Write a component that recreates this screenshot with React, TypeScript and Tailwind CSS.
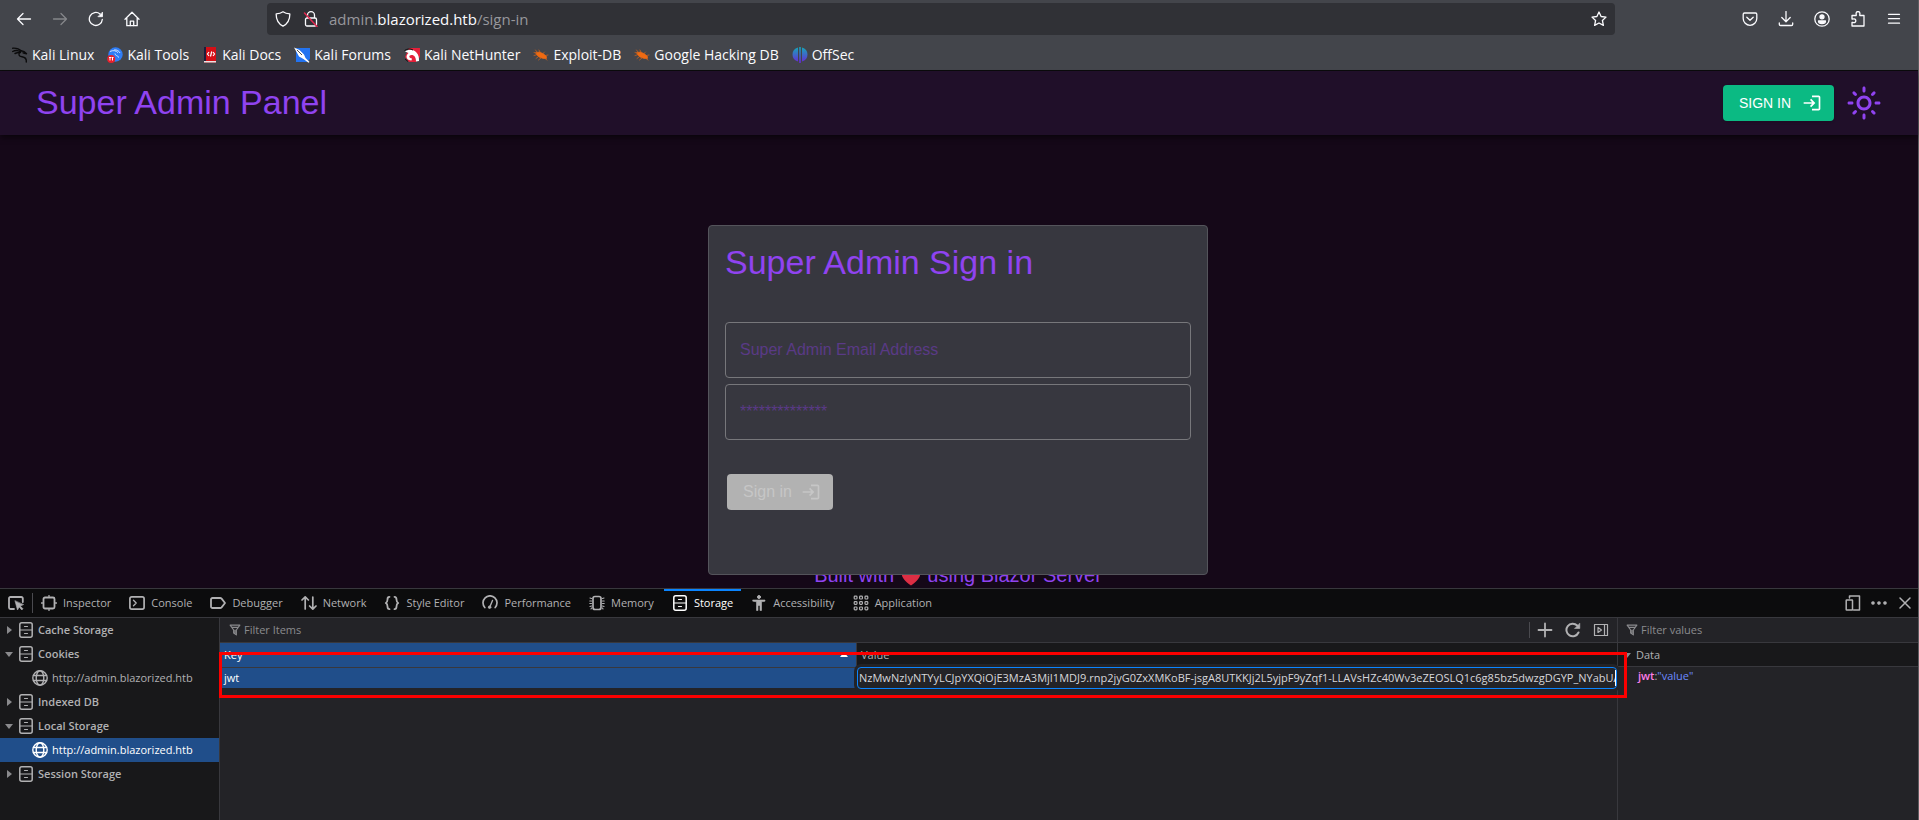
import React from "react";
import { MdLogin, MdOutlineLightMode } from "react-icons/md";

const token =
    "NzMwNzIyNTYyLCJpYXQiOjE3MzA3MjI1MDJ9.rnp2jyG0ZxXMKoBF-jsgA8UTKKJj2L5yjpF9yZqf1-LLAVsHZc40Wv3eZEOSLQ1c6g85bz5dwzgDGYP_NYabUA";

type IconProps = {
    children: React.ReactNode;
    className?: string;
    width?: number;
};

// 16x16 line icon used by the browser chrome and the devtools
function Icon({ children, className = "size-4", width = 1.3 }: IconProps) {
    return (
        <svg
            viewBox="0 0 16 16"
            fill="none"
            stroke="currentColor"
            strokeWidth={width}
            strokeLinecap="round"
            strokeLinejoin="round"
            className={`shrink-0 ${className}`}
            aria-hidden="true"
        >
            {children}
        </svg>
    );
}

const BugIcon = () => (
    <Icon className="size-4 text-[#ef6a12]" width={0.6}>
        <path d="M3 5.500 6.500 5l4 1.800 3 2.700 0 2-3.500 0-4-1.500-2.500-2.300z" fill="currentColor" />
        <path d="M4 5 2.500 3M7 5 6 3M10 6.500l1.500-1.500M12.500 8.500l2.500-.5M3 8 1 8.500M5 10l-2 1.500M8 11l-2.500 2M12 11.500l2 1.500M1 5.500l2 .5" />
    </Icon>
);

const bookmarks = [
    {
        name: "Kali Linux",
        icon: (
            <Icon className="size-4 text-[#0b0b0c]" width={1.4}>
                <path d="M.7 1.200C4 1 7 1.600 9 4M.7 4.500C3 3.300 6 3.300 8.500 5M3 6.500c2-1 3.500-1.200 5.500-1" />
                <path d="M8.500 3.500c2.500.3 4.500 1 6 3.200l-2-.4-1.500-.5" />
                <path d="M8.500 4.500C5.500 7 7 9.500 10 9.800c3 .4 4.700 2 4.300 5.200" />
            </Icon>
        ),
    },
    {
        name: "Kali Tools",
        icon: (
            <svg viewBox="0 0 16 16" className="size-4 shrink-0" aria-hidden="true">
                <circle cx="8.500" cy="7.500" r="7.200" fill="#2f7df6" />
                <path d="M3 4.500c3-1.500 6-1 8 1.200M7 3c3-.5 5 1 6 3M8 6.500c0 2 2.500 2 4 4" fill="none" stroke="#cfe2ff" strokeWidth="1" />
                <circle cx="4.200" cy="12" r="4" fill="#e8202c" />
                <path d="M2 10.500h2M3 10.500v3M4.500 10.500h2M5.500 10.500v3" stroke="#fff" strokeWidth="1" />
            </svg>
        ),
    },
    {
        name: "Kali Docs",
        icon: (
            <svg viewBox="0 0 16 16" className="size-4 shrink-0" aria-hidden="true">
                <path d="M2 0h12v15.500H2z" fill="#d40f16" />
                <path d="M2 0h2v15H2z" fill="#1d1d3c" />
                <path d="M2 14h12v1.500H2z" fill="#e9e4e4" />
                <path d="M7 5 5.500 7 7 9M11 5l1.500 2L11 9M9.700 4.500l-1.200 5" fill="none" stroke="#fff" strokeWidth="1.200" />
            </svg>
        ),
    },
    {
        name: "Kali Forums",
        icon: (
            <svg viewBox="0 0 16 16" className="size-4 shrink-0" aria-hidden="true">
                <path d="M2 1h14v11l-3 3H2z" fill="#2373f0" />
                <path d="M0 .5 5.500 3 10 7.500l1.500 3.500 4 4-1 .7-5-3.700L5 9.500 2 4z" fill="#fff" />
                <path d="m3 3 5 5" stroke="#222" strokeWidth=".8" />
            </svg>
        ),
    },
    {
        name: "Kali NetHunter",
        icon: (
            <svg viewBox="0 0 16 16" className="size-4 shrink-0" aria-hidden="true">
                <path d="M5 1h11v9l-4 5H5L1 10z" fill="#e5203a" />
                <path d="M1 4.500c3-2.500 8-2.500 11 .5s3 6 3 9l-3 .5c0-4-1.500-6.500-4.500-6.500S4.500 11 8 11.500l-.5 2C2.500 13.500 1 9 4.500 6z" fill="#fff" />
                <path d="M.5 3.500c3-2 6-2 8.500-.5M1 12l3 2.500" stroke="#111" strokeWidth="1" fill="none" />
            </svg>
        ),
    },
    { name: "Exploit-DB", icon: <BugIcon /> },
    { name: "Google Hacking DB", icon: <BugIcon /> },
    {
        name: "OffSec",
        icon: (
            <svg viewBox="0 0 16 16" className="size-4 shrink-0" aria-hidden="true">
                <defs>
                    <linearGradient id="offsec" x1="0" y1="0" x2="0" y2="1">
                        <stop offset="0" stopColor="#14a8b8" />
                        <stop offset="1" stopColor="#6a25d8" />
                    </linearGradient>
                </defs>
                <path d="M6 .5v14C2.500 13.500.5 11 .5 7.500S2.500 1.500 6 .5zM10 .5v14c3.500-1 5.500-3.500 5.500-7S13.500 1.500 10 .5zM7.200 0h1.600v16H7.200z" fill="url(#offsec)" />
            </svg>
        ),
    },
];

const StorageIcon = ({ className = "size-4" }: { className?: string }) => (
    <Icon className={className} width={1.5}>
        <rect x="1.800" y=".8" width="12.400" height="14.400" rx="2" />
        <path d="M2 8h12" strokeWidth="1.200" />
        <path d="M6.500 4.500h3M6.500 11.500h3" strokeWidth="1.200" />
    </Icon>
);

const GlobeIcon = () => (
    <Icon width={1.4}>
        <circle cx="8" cy="8" r="7.200" />
        <ellipse cx="8" cy="8" rx="3.800" ry="7.200" />
        <path d="M1.500 5.500h13M1.500 10.500h13" />
    </Icon>
);

const FilterIcon = () => (
    <Icon className="size-3" width={1.5}>
        <path d="M1.500 1.500h13L9.800 8v6.500L6.200 12V8zM4 4.500h8M8 8v4" />
    </Icon>
);

const tabs = [
    {
        name: "Inspector",
        icon: (
            <Icon width={1.8}>
                <rect x="2.500" y="2.500" width="11" height="11" rx="1.500" />
                <path d="M8 .5v1M8 14.500v1M.5 8h1M14.500 8h1" strokeWidth="1.300" />
            </Icon>
        ),
    },
    {
        name: "Console",
        icon: (
            <Icon width={1.7}>
                <rect x=".9" y="1.900" width="14.200" height="12.200" rx="1.800" />
                <path d="M4.500 5.200 7.200 8l-2.700 2.800" strokeWidth="1.300" />
            </Icon>
        ),
    },
    {
        name: "Debugger",
        icon: (
            <Icon width={1.8}>
                <path d="M2.500 3h7.700c.6 0 1 .2 1.400.6L15 8l-3.400 4.400c-.4.4-.8.6-1.400.6H2.500C1.600 13 1 12.400 1 11.500v-7C1 3.600 1.600 3 2.500 3z" />
            </Icon>
        ),
    },
    {
        name: "Network",
        icon: (
            <Icon width={1.7}>
                <path d="M4.200 14V2M1 5l3.200-3.200L7.400 5M11.800 2v12M8.600 11l3.200 3.200L15 11" />
            </Icon>
        ),
    },
    {
        name: "Style Editor",
        icon: (
            <Icon width={1.8}>
                <path d="M5.500 1.800C3.500 1.800 3.500 3 3.500 4.500S3.300 7.300 1.800 8c1.500.7 1.700 2 1.700 3.500s0 2.700 2 2.700M10.500 1.800c2 0 2 1.200 2 2.700s.2 2.800 1.700 3.500c-1.500.7-1.700 2-1.700 3.500s0 2.700-2 2.700" />
            </Icon>
        ),
    },
    {
        name: "Performance",
        icon: (
            <Icon width={1.7}>
                <path d="M2.800 12.500a7 7 0 1 1 10.400 0" />
                <path d="m10.500 5.500-2.500 6" strokeWidth="1.400" />
                <circle cx="7.600" cy="12.200" r="1.300" fill="currentColor" strokeWidth=".8" />
            </Icon>
        ),
    },
    {
        name: "Memory",
        icon: (
            <Icon width={1.7}>
                <rect x="4" y="1.500" width="8" height="13" rx="2" />
                <path d="M2.500 3.500 1 3M2.500 6H.8M2.500 8.500H.8M2.500 11 1 11.500M13.500 3.500 15 3M13.500 6h1.700M13.500 8.500h1.700M13.500 11l1.500.5M2.500 13 2 14M13.500 13l.5 1" strokeWidth="1.100" />
            </Icon>
        ),
    },
    { name: "Storage", icon: <StorageIcon /> },
    {
        name: "Accessibility",
        icon: (
            <Icon width={1}>
                <circle cx="8" cy="2" r="1.500" fill="currentColor" />
                <path d="M2 5h12v1.200l-3.500.6V15.500H9v-5H7v5H5.500V6.800L2 6.200z" fill="currentColor" strokeWidth=".6" />
            </Icon>
        ),
    },
    {
        name: "Application",
        icon: (
            <Icon width={1.2}>
                {[2.6, 8, 13.4].map((y) =>
                    [2.6, 8, 13.4].map((x) => (
                        <rect key={`${x}-${y}`} x={x - 1.4} y={y - 1.4} width="2.800" height="2.800" rx=".8" />
                    ))
                )}
            </Icon>
        ),
    },
];

const storageTree = [
    { name: "Cache Storage", open: false, hosts: [] },
    { name: "Cookies", open: true, hosts: [{ url: "http://admin.blazorized.htb", selected: false }] },
    { name: "Indexed DB", open: false, hosts: [] },
    { name: "Local Storage", open: true, hosts: [{ url: "http://admin.blazorized.htb", selected: true }] },
    { name: "Session Storage", open: false, hosts: [] },
];

function BrowserBar() {
    return (
        <div className="bg-[#43454b] border-b border-[#0c0c0d] text-[#fbfbfe]">
            <div className="flex items-center h-[38px] pl-4 pr-4">
                <div className="flex items-center gap-5 w-[251px] shrink-0">
                    <button aria-label="Back">
                        <Icon>
                            <path d="M14.500 8h-13M7 2.500 1.500 8 7 13.500" />
                        </Icon>
                    </button>
                    <button aria-label="Forward" className="text-[#85868a]">
                        <Icon>
                            <path d="M1.500 8h13M9 2.500 14.500 8 9 13.500" />
                        </Icon>
                    </button>
                    <button aria-label="Reload">
                        <Icon>
                            <path d="M14.300 8.500A6.500 6.500 0 1 1 12 3" />
                            <path d="M14.500 1.500v4.200h-4.200z" fill="currentColor" strokeWidth=".8" />
                        </Icon>
                    </button>
                    <button aria-label="Home">
                        <Icon>
                            <path d="M1 8.200 8 1.300l7 6.900M2.800 7v7.700h10.400V7" />
                            <path d="M6.300 14.500v-4.300h3.400v4.300" />
                        </Icon>
                    </button>
                </div>
                <div className="flex items-center grow h-8 bg-[#303136] rounded px-2">
                    <Icon>
                        <path d="M8 .8c2 1.500 4.200 2 6.800 2 .2 5.700-1.800 9.800-6.800 12.400C3 12.600 1 8.500 1.200 2.800 3.800 2.800 6 2.300 8 .8z" />
                    </Icon>
                    <Icon className="size-4 ml-3">
                        <rect x="2.500" y="7" width="11" height="8" rx="1.500" />
                        <path d="M4.500 6.500V4.200a3.500 3.500 0 0 1 7 0v2.300" />
                        <path d="M1.500 2 14 15.500" stroke="#e22850" strokeWidth="1.500" />
                    </Icon>
                    <p className="grow ml-[10px] text-[15px] text-[#97979c]">
                        admin.<span className="text-[#fbfbfe]">blazorized.htb</span>/sign-in
                    </p>
                    <button aria-label="Bookmark this page">
                        <Icon>
                            <path d="m8 1 2.100 4.500 4.900.6-3.600 3.400 1 4.900L8 12l-4.400 2.400 1-4.900L1 6.100l4.900-.6z" />
                        </Icon>
                    </button>
                </div>
                <div className="flex items-center gap-5 ml-[127px] shrink-0">
                    <button aria-label="Save to Pocket">
                        <Icon>
                            <path d="M2.500 2h11c.8 0 1.300.5 1.300 1.300V7.500a6.800 6.800 0 0 1-13.600 0V3.300C1.200 2.500 1.700 2 2.500 2z" />
                            <path d="M4.800 6.200 8 9.300l3.200-3.100" />
                        </Icon>
                    </button>
                    <button aria-label="Downloads">
                        <Icon>
                            <path d="M8 .5v10M3.800 6.500 8 10.700l4.200-4.200M1.300 12v1.200c0 .8.5 1.300 1.300 1.300h10.800c.8 0 1.300-.5 1.300-1.300V12" />
                        </Icon>
                    </button>
                    <button aria-label="Account">
                        <Icon>
                            <circle cx="8" cy="8" r="7.200" />
                            <circle cx="8" cy="5.800" r="2" fill="currentColor" />
                            <path d="M4.500 10h7c0 1.500-1.500 2.600-3.500 2.600S4.500 11.500 4.500 10z" fill="currentColor" />
                        </Icon>
                    </button>
                    <button aria-label="Extensions">
                        <Icon>
                            <path d="M2 15V11.500h1.200a1.900 1.900 0 1 0 0-3.500H2V4.500h4.200V3a1.900 1.900 0 1 1 3.600 0v1.500H14V15z" />
                        </Icon>
                    </button>
                    <button aria-label="Menu">
                        <Icon>
                            <path d="M2.500 3.300h11M2.500 7.700h11M2.500 12.200h11" />
                        </Icon>
                    </button>
                </div>
            </div>
            <nav className="flex items-center gap-[13px] h-8 pt-0.5 pl-3 text-sm">
                {bookmarks.map((el) => (
                    <a key={el.name} href="#" className="flex items-center gap-1 whitespace-nowrap">
                        {el.icon}
                        {el.name}
                    </a>
                ))}
            </nav>
        </div>
    );
}

function AdminPage() {
    return (
        <div className="bg-[#150818] text-[#9043f0] font-['Liberation_Sans',sans-serif]">
            <header className="relative flex items-center justify-between h-16 pl-9 pr-9 bg-[#200f29] shadow-md shadow-black/40">
                <h1 className="pb-0.5 text-[34px] leading-10">Super Admin Panel</h1>
                <div className="flex items-center gap-3">
                    <button className="flex items-center justify-between w-[111px] h-9 pl-4 pr-3 rounded bg-[#0bba83] text-white text-sm shadow">
                        SIGN IN
                        <MdLogin size={20} />
                    </button>
                    <button aria-label="Light mode">
                        <MdOutlineLightMode size={36} />
                    </button>
                </div>
            </header>
            <main className="flex flex-col items-center pt-[90px] pb-px pr-0.5">
                <form className="relative z-10 w-[500px] h-[350px] p-4 rounded border border-[#54545b] bg-[#37373f]">
                    <h2 className="text-[34px] leading-10">Super Admin Sign in</h2>
                    <div className="flex flex-col gap-[6px] mt-10">
                        <input
                            type="email"
                            aria-label="Super Admin Email Address"
                            placeholder="Super Admin Email Address"
                            className="w-full h-14 px-[14px] rounded border border-[#77777b] bg-transparent placeholder:text-[#5a3a86]"
                        />
                        <input
                            type="password"
                            aria-label="Password"
                            placeholder="**************"
                            className="w-full h-14 px-[14px] rounded border border-[#77777b] bg-transparent placeholder:text-[#5a3a86]"
                        />
                    </div>
                    <button
                        disabled
                        className="flex items-center justify-between w-[106px] h-9 mt-[34px] ml-[2px] pl-4 pr-3 rounded bg-[#b2b2b2] text-[#c6c6c6]"
                    >
                        Sign in
                        <MdLogin size={20} />
                    </button>
                </form>
                <p className="-mt-3 text-xl leading-6">
                    Built with{" "}
                    <svg viewBox="0 0 20 18" className="inline w-5 h-[18px] mx-px" aria-label="love" role="img">
                        <path d="M10 17.500C4 13.500.8 9.500.8 5.700.8 2.800 2.900.8 5.500.8 7.500.8 9.200 1.900 10 3.700 10.800 1.900 12.500.8 14.500.8c2.600 0 4.700 2 4.700 4.900 0 3.800-3.200 7.800-9.200 11.800z" fill="#dd2e44" />
                    </svg>{" "}
                    using Blazor Server
                </p>
            </main>
        </div>
    );
}

function Toolbox() {
    return (
        <div className="flex items-center justify-between h-[30px] border-y border-[#38383d] bg-[#0c0c0d] text-[#b1b1b3]">
            <div className="flex items-center h-full">
                <button aria-label="Pick an element" className="px-2">
                    <Icon width={1.8}>
                        <path d="M14.800 7V3.500c0-.9-.6-1.500-1.500-1.500H2.500C1.600 2 1 2.600 1 3.500v9c0 .9.600 1.500 1.500 1.500H6" />
                        <path d="m7 6 2.500 9 1.700-3 2.600 3 1.200-1.200-2.700-2.700 3-1.400z" fill="currentColor" strokeWidth=".6" />
                    </Icon>
                </button>
                <div className="w-px h-5 bg-[#4a4a4f]" />
                <div className="flex h-full gap-0.5">
                    {tabs.map((el) => (
                        <button
                            key={el.name}
                            className={`flex items-center gap-[6px] h-full px-2 border-y-2 border-b-transparent whitespace-nowrap ${
                                el.name === "Storage" ? "border-t-[#0a84ff] text-white" : "border-t-transparent"
                            }`}
                        >
                            {el.icon}
                            {el.name}
                        </button>
                    ))}
                </div>
            </div>
            <div className="flex items-center gap-[10px] pr-[5px]">
                <button aria-label="Responsive design mode">
                    <Icon width={1.5}>
                        <path d="M4.500 3V1h10v14H8.500" />
                        <rect x="1.200" y="5" width="6.300" height="10" rx=".5" />
                    </Icon>
                </button>
                <button aria-label="More tools">
                    <Icon width={1.2}>
                        <circle cx="2" cy="8" r="1.200" fill="currentColor" />
                        <circle cx="8" cy="8" r="1.200" fill="currentColor" />
                        <circle cx="14" cy="8" r="1.200" fill="currentColor" />
                    </Icon>
                </button>
                <button aria-label="Close">
                    <Icon width={1.5}>
                        <path d="m3 3 10 10M13 3 3 13" />
                    </Icon>
                </button>
            </div>
        </div>
    );
}

function StorageTree() {
    return (
        <ul className="w-[220px] shrink-0 border-r border-[#38383d] bg-[#18181a] text-[#b1b1b3]">
            {storageTree.map((el) => (
                <li key={el.name}>
                    <div className="flex items-center h-6 pl-1 font-semibold">
                        <svg viewBox="0 0 10 10" className="size-[10px] text-[#8a8a8d]" aria-hidden="true">
                            <path d={el.open ? "M1 3h8L5 8z" : "M3 1v8l5-4z"} fill="currentColor" />
                        </svg>
                        <StorageIcon className="size-4 ml-1 mr-1" />
                        {el.name}
                    </div>
                    {el.hosts.map((host) => (
                        <div
                            key={host.url}
                            className={`flex items-center gap-1 h-6 pl-8 ${host.selected ? "bg-[#204e8a] text-white" : ""}`}
                        >
                            <GlobeIcon />
                            {host.url}
                        </div>
                    ))}
                </li>
            ))}
        </ul>
    );
}

function StorageTable() {
    return (
        <div className="relative grow min-w-0">
            <div className="flex items-center h-[25px] pl-[9px] pr-2 border-b border-[#38383d] text-[#8b8b8e]">
                <FilterIcon />
                <input
                    aria-label="Filter Items"
                    placeholder="Filter Items"
                    className="grow ml-[3px] bg-transparent placeholder:text-[#8b8b8e]"
                />
                <div className="w-px h-4 mr-[7px] bg-[#4a4a4f]" />
                <div className="flex items-center gap-3 text-[#b1b1b3]">
                    <button aria-label="Add item">
                        <Icon width={1.8}>
                            <path d="M8 1.500v13M1.500 8h13" />
                        </Icon>
                    </button>
                    <button aria-label="Refresh items">
                        <Icon width={2}>
                            <path d="M13.500 10.500A6.300 6.300 0 1 1 12.200 3.500" />
                            <path d="M14.800 1.500v5H9.800z" fill="currentColor" strokeWidth=".6" />
                        </Icon>
                    </button>
                    <button aria-label="Toggle sidebar">
                        <Icon width={1.2}>
                            <rect x="1.500" y="2.500" width="13" height="11" />
                            <path d="M11.500 2.500v11M5 5.500v5L8.500 8z" />
                        </Icon>
                    </button>
                </div>
            </div>
            <table className="w-full table-fixed border-separate border-spacing-0 text-left">
                <thead>
                    <tr className="h-[25px]">
                        <th className="w-[45.6%] py-0 px-1 bg-[#204e8a] font-normal text-white border-r border-b border-[#38383d]">
                            <div className="flex items-center justify-between pr-1">
                                Key
                                <svg viewBox="0 0 8 6" className="w-2 h-[6px]" aria-hidden="true">
                                    <path d="M4 0 8 5H0z" fill="currentColor" />
                                </svg>
                            </div>
                        </th>
                        <th className="py-0 px-1 bg-[#18181a] font-normal text-[#b1b1b3] border-b border-[#38383d]">Value</th>
                    </tr>
                </thead>
                <tbody>
                    <tr className="h-5">
                        <td className="py-0 px-1 bg-[#204e8a] text-white">jwt</td>
                        <td className="p-0">
                            <div className="relative flex items-center h-[22px] pl-px rounded-sm bg-[#232327] border border-[#0a84ff] ring-3 ring-[#232327] text-[#d7d7db] -my-px">
                                <input
                                    aria-label="jwt value"
                                    defaultValue={token}
                                    className="w-full h-4 bg-transparent border-r border-white outline-none"
                                />
                            </div>
                        </td>
                    </tr>
                </tbody>
            </table>
            {/* red highlight drawn over the edited row */}
            <div className="absolute z-10 -left-px -right-[10px] top-[34px] h-[46px] border-3 border-[#fb0000] pointer-events-none" />
        </div>
    );
}

function ValuePanel() {
    return (
        <div className="w-[301px] shrink-0 border-l border-[#38383d]">
            <div className="flex items-center h-[25px] pl-2 border-b border-[#38383d] text-[#8b8b8e]">
                <FilterIcon />
                <input
                    aria-label="Filter values"
                    placeholder="Filter values"
                    className="grow ml-[3px] bg-transparent placeholder:text-[#8b8b8e]"
                />
            </div>
            <div className="flex items-center gap-1 h-6 pl-1 border-b border-[#38383d] bg-[#18181a] text-[#b1b1b3]">
                <svg viewBox="0 0 10 10" className="size-[10px] text-[#8a8a8d]" aria-hidden="true">
                    <path d="M1 3h8L5 8z" fill="currentColor" />
                </svg>
                Data
            </div>
            <p className="pl-5 leading-[18px] text-[#b1b1b3]">
                <span className="font-semibold text-[#ff7de9]">jwt</span>:
                <span className="text-[#6b89ff]">"value"</span>
            </p>
        </div>
    );
}

export default function App() {
    return (
        <div className="flex flex-col min-h-screen bg-[#232327] border-r border-[#5c5c60] font-['Open_Sans','Noto_Sans',sans-serif]">
            <BrowserBar />
            <AdminPage />
            <section className="flex flex-col grow text-[11px] leading-4">
                <Toolbox />
                <div className="flex grow">
                    <StorageTree />
                    <StorageTable />
                    <ValuePanel />
                </div>
            </section>
        </div>
    );
}
